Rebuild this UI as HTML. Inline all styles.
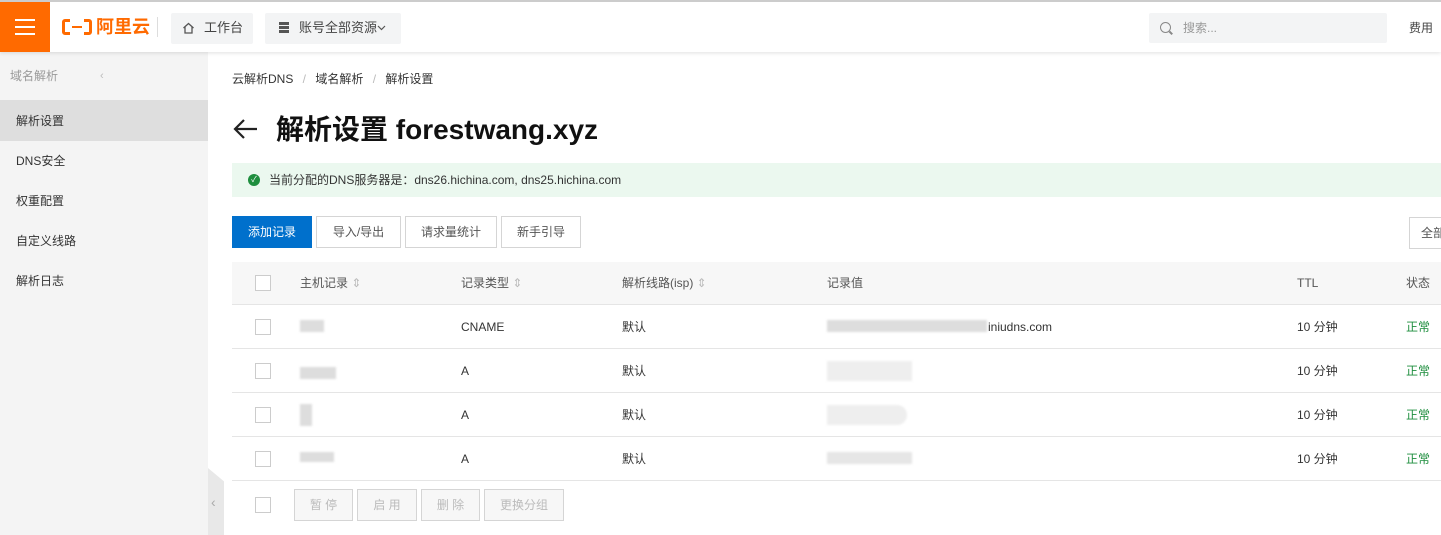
<!DOCTYPE html>
<html><head><meta charset="utf-8"><style>
*{margin:0;padding:0;box-sizing:border-box}
body{width:1441px;height:535px;overflow:hidden;background:#fff;font-family:"Liberation Sans","Noto Sans CJK SC",sans-serif;font-size:12px;color:#333;position:relative}
.abs{position:absolute;line-height:16px}
.hdr{left:0;top:0;width:1441px;height:52px;background:#fff;border-top:2px solid #ccc;box-shadow:0 1px 4px rgba(0,0,0,.12);z-index:3}
.side{left:0;top:52px;width:208px;height:483px;background:#f4f4f4}
.btn{position:absolute;height:32px;border:1px solid #d5d5d5;background:#f7f7f7;text-align:center;line-height:30px;color:#555;font-size:12px}
.row{position:absolute;left:232px;width:1209px;height:44px;border-bottom:1px solid #e5e5e5}
.cb{position:absolute;left:23px;width:16px;height:16px;border:1px solid #ccc;background:#fff}
.t{position:absolute;font-size:12px;color:#333;line-height:16px;height:16px}
.blur{position:absolute;background:#ddd;filter:blur(1px)}
</style></head><body>
<div class="abs hdr">
  <div class="abs" style="left:0;top:0;width:50px;height:50px;background:#ff6a00">
    <div class="abs" style="left:15px;top:17px;width:20px;height:2px;background:#fff"></div>
    <div class="abs" style="left:15px;top:24px;width:20px;height:2px;background:#fff"></div>
    <div class="abs" style="left:15px;top:31px;width:20px;height:2px;background:#fff"></div>
  </div>
  <div class="abs" style="left:62px;top:17px;width:30px;height:16px;border:3px solid #ff6a00;border-radius:3px"></div>
  <div class="abs" style="left:70px;top:16px;width:14px;height:18px;background:#fff"></div>
  <div class="abs" style="left:72px;top:24px;width:10px;height:2px;background:#ff6a00"></div>
  <div class="abs" style="left:96px;top:15px;font-size:18px;line-height:20px;font-weight:bold;color:#ff6a00">阿里云</div>
  <div class="abs" style="left:157px;top:15px;width:1px;height:20px;background:#ddd"></div>
  <div class="abs" style="left:171px;top:11px;width:82px;height:31px;background:#f3f4f5;border-radius:2px"></div>
  <svg class="abs" style="left:182px;top:20px" width="13" height="12" viewBox="0 0 13 12"><path d="M1.5 6L6.5 1.5 11.5 6M3 5v6h7V5" fill="none" stroke="#555" stroke-width="1.3"/></svg>
  <div class="abs" style="left:204px;top:18px;font-size:13px;color:#444">工作台</div>
  <div class="abs" style="left:265px;top:11px;width:136px;height:31px;background:#f3f4f5;border-radius:2px"></div>
  <div class="abs" style="left:279px;top:20px;width:10px;height:3px;background:#555"></div>
  <div class="abs" style="left:279px;top:24px;width:10px;height:3px;background:#555"></div>
  <div class="abs" style="left:279px;top:28px;width:10px;height:3px;background:#555"></div>
  <div class="abs" style="left:299px;top:18px;font-size:13px;color:#444">账号全部资源</div>
  <svg class="abs" style="left:377px;top:23px" width="9" height="6" viewBox="0 0 9 6"><path d="M1 1l3.5 3.5L8 1" fill="none" stroke="#555" stroke-width="1.2"/></svg>
  <div class="abs" style="left:1149px;top:11px;width:238px;height:30px;background:#f3f4f5;border-radius:2px"></div>
  <div class="abs" style="left:1160px;top:20px;width:11px;height:11px;border:1.5px solid #888;border-radius:50%"></div>
  <div class="abs" style="left:1169px;top:30px;width:4px;height:1.5px;background:#888;transform:rotate(45deg)"></div>
  <div class="abs" style="left:1183px;top:18px;font-size:12px;color:#999">搜索...</div>
  <div class="abs" style="left:1409px;top:18px;font-size:12px;color:#444">费用</div>
</div>
<div class="abs side">
  <div class="abs" style="left:10px;top:16px;color:#999;font-size:12px">域名解析</div>
  <div class="abs" style="left:100px;top:16px;color:#bbb;font-size:11px">‹</div>
  <div class="abs" style="left:0;top:48px;width:208px;height:41px;background:#dedede"></div>
  <div class="abs" style="left:16px;top:61px">解析设置</div>
  <div class="abs" style="left:16px;top:101px">DNS安全</div>
  <div class="abs" style="left:16px;top:141px">权重配置</div>
  <div class="abs" style="left:16px;top:181px">自定义线路</div>
  <div class="abs" style="left:16px;top:221px">解析日志</div>
</div>
<div class="abs" style="left:208px;top:468px;width:16px;height:67px;background:#e8e8e8;clip-path:polygon(0 0,100% 20%,100% 100%,0 100%)"></div>
<div class="abs" style="left:211px;top:494px;color:#aaa;font-size:14px">‹</div>
<div class="abs" style="left:232px;top:71px;color:#333">云解析DNS <span style="color:#bbb;margin:0 6px">/</span> 域名解析 <span style="color:#bbb;margin:0 6px">/</span> 解析设置</div>
<svg class="abs" style="left:233px;top:118px" width="25" height="22" viewBox="0 0 25 22"><path d="M24 11H2M11 2L2 11l9 9" fill="none" stroke="#222" stroke-width="2.2"/></svg>
<div class="abs" style="left:276px;top:113px;font-size:28px;line-height:34px;font-weight:bold;color:#111">解析设置 forestwang.xyz</div>
<div class="abs" style="left:232px;top:163px;width:1209px;height:34px;background:#ebf8ef"></div>
<div class="abs" style="left:248px;top:174px;width:12px;height:12px;border-radius:50%;background:#1e8e3e;color:#fff;font-size:8px;text-align:center;line-height:12px">✓</div>
<div class="abs" style="left:269px;top:172px;color:#333">当前分配的DNS服务器是：dns26.hichina.com, dns25.hichina.com</div>
<div class="btn" style="left:232px;top:216px;width:80px;background:#0070cc;border-color:#0070cc;color:#fff">添加记录</div>
<div class="btn" style="left:316px;top:216px;width:85px;background:#fff">导入/导出</div>
<div class="btn" style="left:405px;top:216px;width:92px;background:#fff">请求量统计</div>
<div class="btn" style="left:501px;top:216px;width:80px;background:#fff">新手引导</div>
<div class="btn" style="left:1409px;top:217px;width:40px;background:#fff;text-align:left;padding-left:11px">全部</div>
<div class="row" style="top:262px;height:43px;background:#f7f7f7">
  <div class="cb" style="top:13px"></div>
  <div class="t" style="left:68px;top:13px;color:#555">主机记录 <span style="color:#bbb">⇕</span></div>
  <div class="t" style="left:229px;top:13px;color:#555">记录类型 <span style="color:#bbb">⇕</span></div>
  <div class="t" style="left:390px;top:13px;color:#555">解析线路(isp) <span style="color:#bbb">⇕</span></div>
  <div class="t" style="left:595px;top:13px;color:#555">记录值</div>
  <div class="t" style="left:1065px;top:13px;color:#555">TTL</div>
  <div class="t" style="left:1174px;top:13px;color:#555">状态</div>
</div>
<div class="row" style="top:305px">
  <div class="cb" style="top:14px"></div><div class="blur" style="left:68px;top:15px;width:24px;height:12px"></div>
  <div class="t" style="left:229px;top:14px">CNAME</div><div class="t" style="left:390px;top:14px">默认</div>
  <div class="blur" style="left:595px;top:15px;width:160px;height:12px"></div><div class="t" style="left:756px;top:14px">iniudns.com</div>
  <div class="t" style="left:1065px;top:14px">10 分钟</div><div class="t" style="left:1174px;top:14px;color:#1e8e3e">正常</div>
</div>
<div class="row" style="top:349px">
  <div class="cb" style="top:14px"></div><div class="blur" style="left:68px;top:18px;width:36px;height:12px"></div>
  <div class="t" style="left:229px;top:14px">A</div><div class="t" style="left:390px;top:14px">默认</div>
  <div class="blur" style="left:595px;top:12px;width:85px;height:20px;background:#eee"></div>
  <div class="t" style="left:1065px;top:14px">10 分钟</div><div class="t" style="left:1174px;top:14px;color:#1e8e3e">正常</div>
</div>
<div class="row" style="top:393px">
  <div class="cb" style="top:14px"></div><div class="blur" style="left:68px;top:11px;width:12px;height:22px"></div>
  <div class="t" style="left:229px;top:14px">A</div><div class="t" style="left:390px;top:14px">默认</div>
  <div class="blur" style="left:595px;top:12px;width:80px;height:20px;background:#eee;border-radius:0 10px 10px 0"></div>
  <div class="t" style="left:1065px;top:14px">10 分钟</div><div class="t" style="left:1174px;top:14px;color:#1e8e3e">正常</div>
</div>
<div class="row" style="top:437px">
  <div class="cb" style="top:14px"></div><div class="blur" style="left:68px;top:15px;width:34px;height:10px"></div>
  <div class="t" style="left:229px;top:14px">A</div><div class="t" style="left:390px;top:14px">默认</div>
  <div class="blur" style="left:595px;top:15px;width:85px;height:12px;background:#e6e6e6"></div>
  <div class="t" style="left:1065px;top:14px">10 分钟</div><div class="t" style="left:1174px;top:14px;color:#1e8e3e">正常</div>
</div>
<div class="cb" style="left:255px;top:497px"></div>
<div class="btn" style="left:294px;top:489px;width:59px;color:#bbb">暂 停</div>
<div class="btn" style="left:357px;top:489px;width:60px;color:#bbb">启 用</div>
<div class="btn" style="left:421px;top:489px;width:59px;color:#bbb">删 除</div>
<div class="btn" style="left:484px;top:489px;width:80px;color:#bbb">更换分组</div>
</body></html>
